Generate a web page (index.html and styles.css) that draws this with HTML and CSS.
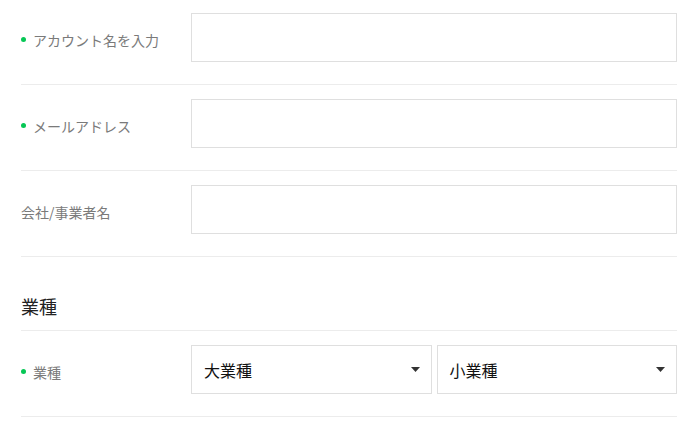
FILE: index.html
```html
<!DOCTYPE html>
<html lang="ja">
<head>
    <meta charset="UTF-8">
    <title>アカウント登録</title>
    <link rel="stylesheet" href="styles.css">
</head>
<body>
    <div class="form">
        <div class="form-row">
            <label class="label required">アカウント名を入力</label>
            <input class="input" type="text">
        </div>
        <div class="form-row">
            <label class="label required">メールアドレス</label>
            <input class="input" type="text">
        </div>
        <div class="form-row">
            <label class="label">会社/事業者名</label>
            <input class="input" type="text">
        </div>

        <div class="section-title">業種</div>

        <div class="form-row">
            <label class="label required">業種</label>
            <div class="select-group">
                <div class="select">
                    <span>大業種</span>
                    <svg class="arrow" width="9" height="5" viewBox="0 0 9 5"><path d="M0 0h9L4.5 5z" fill="#333"/></svg>
                </div>
                <div class="select">
                    <span>小業種</span>
                    <svg class="arrow" width="9" height="5" viewBox="0 0 9 5"><path d="M0 0h9L4.5 5z" fill="#333"/></svg>
                </div>
            </div>
        </div>
    </div>
</body>
</html>
```

FILE: styles.css
```css
body {
    margin: 0;
    font-family: "Noto Sans CJK JP", "Noto Sans", sans-serif;
    background-color: #fff;
    color: #111;
}
.form {
    width: 656px;
    margin: -1px 0 0 21px;
}
.form-row {
    display: grid;
    grid-template-columns: 170px 1fr;
    padding: 14px 0 22px;
    border-bottom: 1px solid #ececec;
}
.label {
    align-self: center;
    margin-top: 4px;
    display: flex;
    align-items: center;
    font-size: 14px;
    color: #7a7a7a;
}
.label.required::before {
    content: "";
    width: 5px;
    height: 5px;
    margin-right: 7px;
    border-radius: 50%;
    background-color: #06c755;
}
.input {
    box-sizing: border-box;
    height: 49px;
    margin: 0;
    border: 1px solid #dfdfdf;
    border-radius: 0;
    outline: none;
    background: #fff;
}
.section-title {
    padding: 36px 0 11px;
    font-size: 18px;
    line-height: 26px;
    color: #222;
    border-bottom: 1px solid #ececec;
}
.select-group {
    display: grid;
    grid-template-columns: 1fr 1fr;
    gap: 5px;
}
.select {
    box-sizing: border-box;
    height: 49px;
    display: flex;
    align-items: center;
    justify-content: space-between;
    padding: 0 11px 0 12px;
    border: 1px solid #dfdfdf;
    font-size: 16px;
    color: #111;
}
```
